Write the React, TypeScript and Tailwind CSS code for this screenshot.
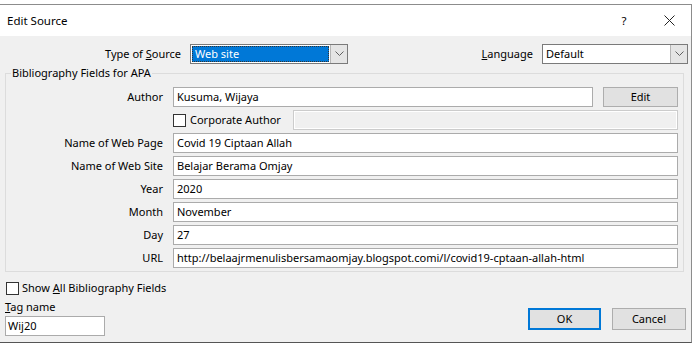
import React from 'react';

const font = { fontFamily: '"Noto Sans", "Liberation Sans", sans-serif' };

const Field: React.FC<{ label: string; value: string }> = ({ label, value }) => (
  <div className="flex items-center mt-[3px]">
    <div className="w-[158px] text-right pr-px">{label}</div>
    <div className="ml-[9px] flex-1 h-[20px] bg-white border border-[#ababab] flex items-center px-[3px] whitespace-nowrap overflow-hidden">
      {value}
    </div>
  </div>
);

const Chevron: React.FC = () => (
  <svg width="9" height="6" viewBox="0 0 9 6" fill="none" stroke="#606060" strokeWidth="1">
    <path d="M0.5 0.5 L4.5 4.5 L8.5 0.5" />
  </svg>
);

const CheckBox: React.FC = () => (
  <div className="w-[13px] h-[13px] bg-white border border-[#333333] shrink-0" />
);

export default function App() {
  return (
    <div className="w-[694px] h-[344px] bg-white overflow-hidden text-[11px] text-black leading-[16px]" style={font}>
      <div className="mt-[4px] w-[692px] h-[339px] border-t border-r border-b border-t-[#8c8c8c] border-r-[#8c8c8c] border-b-[#555555] bg-[#f0f0f0] flex flex-col">
        {/* title bar */}
        <div className="h-[31px] bg-white flex items-center shrink-0 text-[11.5px]">
          <div className="pl-[7px] flex-1 pt-[1px]">Edit Source</div>
          <div className="w-[20px] text-center mr-[28px]">?</div>
          <div className="w-[14px] flex justify-center mr-[15px]">
            <svg width="11" height="11" viewBox="0 0 11 11" stroke="#222" strokeWidth="1">
              <path d="M0.5 0.5 L10.5 10.5 M10.5 0.5 L0.5 10.5" />
            </svg>
          </div>
        </div>

        {/* type of source / language */}
        <div className="flex items-center mt-[8px] h-[20px]">
          <div className="w-[181px] text-right">
            Type of <span className="underline">S</span>ource
          </div>
          <div className="ml-[9px] w-[158px] h-[20px] bg-white border border-[#7a7a7a] flex">
            <div className="flex-1 m-px border border-dotted border-[#333] bg-[#0078d7] text-white flex items-center px-[2px]">
              Web site
            </div>
            <div className="w-[17px] bg-[#e5e5e5] border-l border-[#b5b5b5] flex items-center justify-center">
              <Chevron />
            </div>
          </div>
          <div className="flex-1" />
          <div>
            <span className="underline">L</span>anguage
          </div>
          <div className="ml-[9px] mr-[3px] w-[146px] h-[20px] bg-white border border-[#7a7a7a] flex">
            <div className="flex-1 flex items-center px-[3px]">Default</div>
            <div className="w-[17px] bg-[#e5e5e5] border-l border-[#b5b5b5] flex items-center justify-center">
              <Chevron />
            </div>
          </div>
        </div>

        {/* bibliography group */}
        <fieldset className="ml-[5px] w-[679px] mt-[1px] border border-[#dcdcdc] pr-[5px] pb-[3px]">
          <legend className="ml-[5px] px-px">Bibliography Fields for APA</legend>
          <div className="flex items-center mt-[6px]">
            <div className="w-[158px] text-right pr-px">Author</div>
            <div className="ml-[9px] flex-1 h-[20px] bg-white border border-[#ababab] flex items-center px-[3px]">
              Kusuma, Wijaya
            </div>
            <button className="ml-[10px] w-[75px] h-[20px] bg-[#e1e1e1] border border-[#adadad] flex items-center justify-center">
              Edit
            </button>
          </div>
          <div className="flex items-center mt-[3px] h-[20px]">
            <div className="ml-[167px] w-[120px] flex items-center">
              <CheckBox />
              <span className="ml-[4px]">Corporate Author</span>
            </div>
            <div className="flex-1 h-[20px] border border-[#cccccc] bg-[#f0f0f0] shadow-[inset_0_0_0_1px_#ffffff]" />
          </div>
          <Field label="Name of Web Page" value="Covid 19 Ciptaan Allah" />
          <Field label="Name of Web Site" value="Belajar Berama Omjay" />
          <Field label="Year" value="2020" />
          <Field label="Month" value="November" />
          <Field label="Day" value="27" />
          <Field label="URL" value="http://belaajrmenulisbersamaomjay.blogspot.comi/l/covid19-cptaan-allah-html" />
        </fieldset>

        {/* bottom */}
        <div className="flex items-end mt-[9px]">
          <div className="flex flex-col pl-[5px]">
            <div className="flex items-center ml-px h-[14px]">
              <CheckBox />
              <span className="ml-[3px]">
                Show <span className="underline">A</span>ll Bibliography Fields
              </span>
            </div>
            <div className="mt-[4px]">
              <span className="underline">T</span>ag name
            </div>
            <div className="mt-[1px] w-[100px] h-[20px] bg-white border border-[#ababab] flex items-center px-[2px]">
              Wij20
            </div>
          </div>
          <div className="flex-1" />
          <div className="flex mb-[6px] mr-[5px]">
            <button className="w-[73px] h-[22px] bg-[#e1e1e1] border-2 border-[#0078d7] flex items-center justify-center">
              OK
            </button>
            <button className="ml-[11px] w-[74px] h-[22px] bg-[#e1e1e1] border border-[#adadad] flex items-center justify-center">
              Cancel
            </button>
          </div>
        </div>
      </div>
    </div>
  );
}
